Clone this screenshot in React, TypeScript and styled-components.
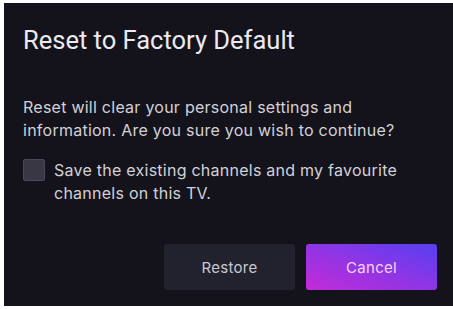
import React from "react";
import styled, { createGlobalStyle } from "styled-components";

const Global = createGlobalStyle`
  html, body { margin: 0; padding: 0; background: #ffffff; }
  body { padding: 3px 0 0 4px; }
  * { box-sizing: border-box; }
`;

const Dialog = styled.div`
  width: 449px;
  height: 303px;
  background: #14131b;
  display: flex;
  flex-direction: column;
  padding: 21px 16px 16px 19px;
  font-family: Inter, "Noto Sans", sans-serif;
`;

const Title = styled.h1`
  margin: 0;
  font-family: Roboto, "Noto Sans", sans-serif;
  font-weight: 400;
  font-size: 25.5px;
  line-height: 32px;
  color: #ebeaf0;
`;

const Message = styled.p`
  margin: 40px 0 0;
  font-size: 16px;
  letter-spacing: 0.25px;
  line-height: 23px;
  color: #d2d1d8;
`;

const CheckRow = styled.label`
  display: flex;
  align-items: flex-start;
  gap: 9px;
  margin-top: 17px;
`;

const Box = styled.span`
  flex: none;
  width: 22px;
  height: 22px;
  margin-top: 0;
  background: #393745;
  border: 1px solid #4b4959;
  border-radius: 2px;
`;

const CheckText = styled.span`
  font-size: 16px;
  letter-spacing: 0.25px;
  line-height: 23px;
  color: #d2d1d8;
`;

const Actions = styled.div`
  margin-top: auto;
  display: flex;
  justify-content: flex-end;
  gap: 11px;
`;

const Button = styled.button<{ $primary?: boolean }>`
  width: 131px;
  height: 46px;
  border: none;
  border-radius: 3px;
  font-family: Inter, "Noto Sans", sans-serif;
  font-size: 15px;
  letter-spacing: 0.3px;
  cursor: pointer;
  color: ${(p) => (p.$primary ? "#f3d6f7" : "#c9c8d0")};
  background: ${(p) =>
    p.$primary
      ? "linear-gradient(20deg, #c42bd8 0%, #8a36e6 55%, #5640f0 100%)"
      : "#21222d"};
`;

export default function App() {
  return (
    <>
      <Global />
      <Dialog>
        <Title>Reset to Factory Default</Title>
        <Message>
          Reset will clear your personal settings and information. Are you sure
          you wish to continue?
        </Message>
        <CheckRow>
          <Box />
          <CheckText>
            Save the existing channels and my favourite channels on this TV.
          </CheckText>
        </CheckRow>
        <Actions>
          <Button>Restore</Button>
          <Button $primary>Cancel</Button>
        </Actions>
      </Dialog>
    </>
  );
}
